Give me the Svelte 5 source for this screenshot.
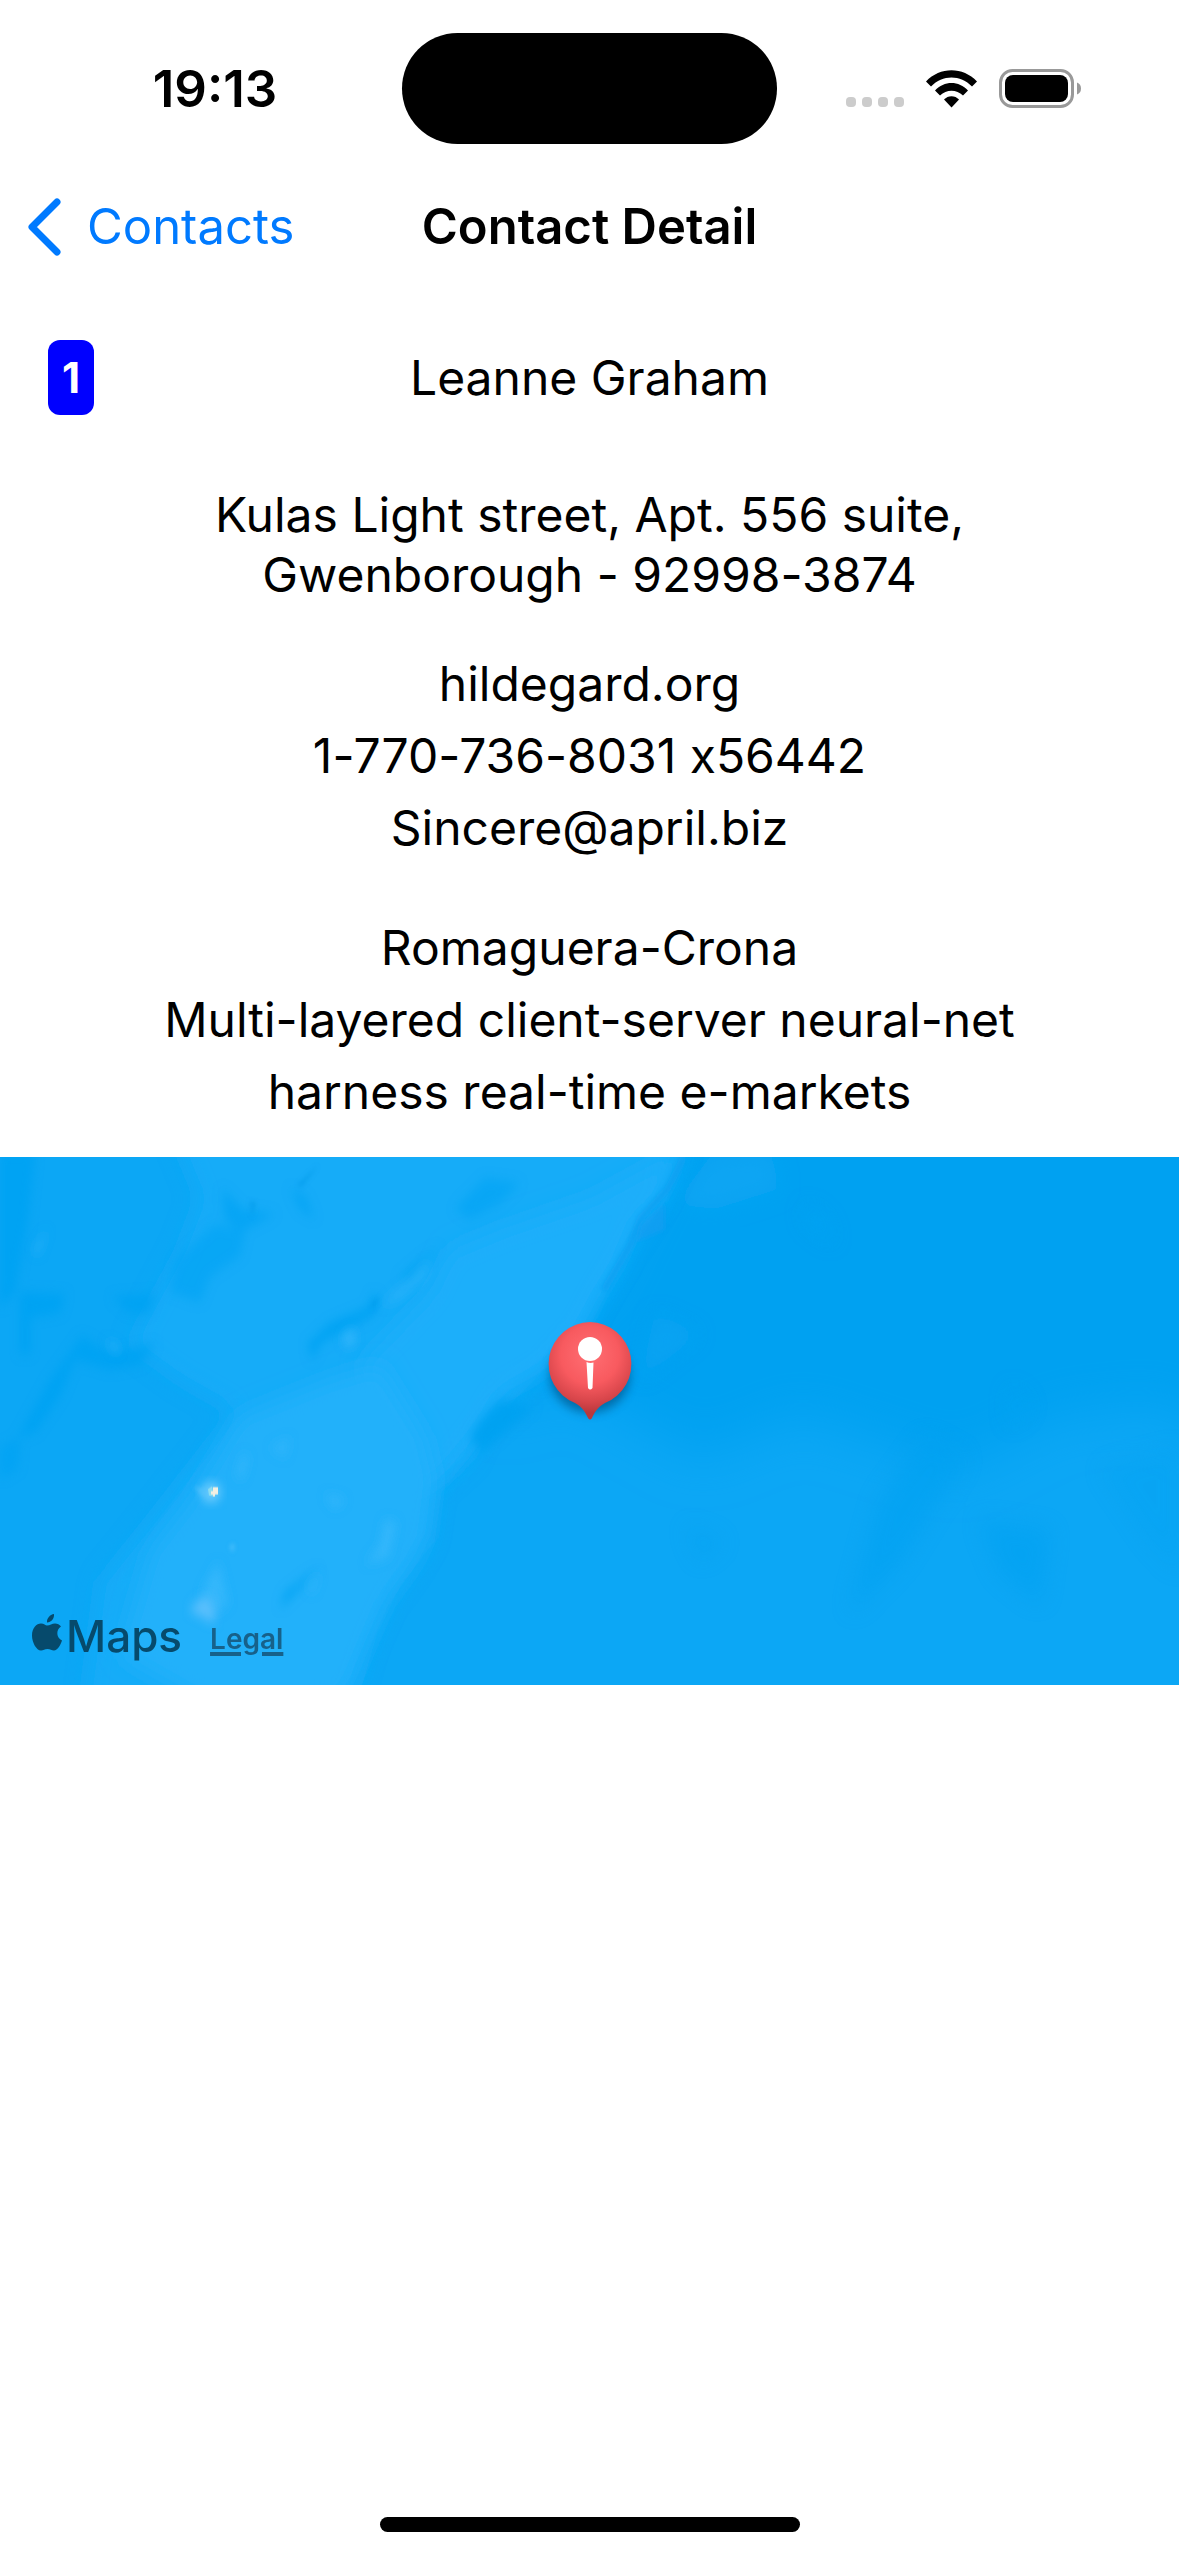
<script>
  const contact = {
    id: 1,
    name: 'Leanne Graham',
    address: ['Kulas Light street, Apt. 556 suite,', 'Gwenborough - 92998-3874'],
    website: 'hildegard.org',
    phone: '1-770-736-8031 x56442',
    email: 'Sincere@april.biz',
    company: ['Romaguera-Crona', 'Multi-layered client-server neural-net', 'harness real-time e-markets']
  };
</script>

<div class="screen">
  <header class="status">
    <div class="side"><time class="clock">19:13</time></div>
    <div class="island"></div>
    <div class="side indicators">
      <div class="dots"><i></i><i></i><i></i><i></i></div>
      <svg class="wifi" viewBox="0 0 51 38" width="51" height="38" aria-label="Wi-Fi">
        <path d="M0 11.500C14-3.500 37-3.500 51 11.500L46 16.500C34.500 4.500 16.500 4.500 5 16.500Z" />
        <path d="M9 20.500C18 10.500 33 10.500 42 20.500L37 25.500C30.500 19 20.500 19 14 25.500Z" />
        <path d="M18 29.500C22 25 29 25 33 29.500L25.500 37.500Z" />
      </svg>
      <svg class="battery" viewBox="0 0 83 39" width="83" height="39" aria-label="Battery full">
        <rect x="1.500" y="1.500" width="72" height="36" rx="12" fill="none" stroke="#999" stroke-width="3" />
        <rect x="6" y="6" width="63" height="27" rx="8" />
        <path d="M78 13.500Q82 15 82 19.500T78 25.500Z" fill="#999" />
      </svg>
    </div>
  </header>

  <nav class="bar">
    <button class="back">
      <svg viewBox="0 0 34 58" width="34" height="58" aria-hidden="true">
        <path d="M30 4L5 29L30 54" fill="none" stroke="currentColor" stroke-width="7" stroke-linecap="round" stroke-linejoin="round" />
      </svg>
      <span>Contacts</span>
    </button>
    <h1>Contact Detail</h1>
  </nav>

  <main>
    <section class="head">
      <span class="badge">{contact.id}</span>
      <h2>{contact.name}</h2>
    </section>
    <address>
      {#each contact.address as line}<div>{line}</div>{/each}
    </address>
    <section class="group">
      <p>{contact.website}</p>
      <p>{contact.phone}</p>
      <p>{contact.email}</p>
    </section>
    <section class="group company">
      {#each contact.company as line}<p>{line}</p>{/each}
    </section>

    <section class="map" aria-label="Map">
      <svg class="sea" viewBox="0 0 1179 528" preserveAspectRatio="xMidYMid slice" aria-hidden="true">
        <defs>
          <filter id="b2" x="-20%" y="-20%" width="140%" height="140%"><feGaussianBlur stdDeviation="2" /></filter>
          <filter id="b4" x="-30%" y="-30%" width="160%" height="160%"><feGaussianBlur stdDeviation="5" /></filter>
          <filter id="b8" x="-30%" y="-30%" width="160%" height="160%"><feGaussianBlur stdDeviation="10" /></filter>
          <filter id="b20" x="-30%" y="-30%" width="160%" height="160%"><feGaussianBlur stdDeviation="24" /></filter>
        </defs>
        <rect width="1179" height="528" fill="#0ca7f5" />

        <g transform="scale(1 1.038)">
          <!-- deep water, east -->
          <path d="M700-60H1260V300L1160 240L1060 250L960 300L800 250L700 290L560 215L500 250L520 180L600 130L640 50Z" fill="#00a1f1" filter="url(#b20)" />
          <g fill="#00a1f1" filter="url(#b8)" opacity=".6">
            <path d="M925 270L965 290L900 390L850 440L880 330Z" />
            <path d="M980 350L1050 360L1040 430L1000 400Z" />
            <path d="M1100 300L1179 280V400L1150 370Z" opacity=".5" />
            <path d="M685 355L725 370L700 390Z" opacity=".6" />
          </g>
          <path d="M710 0L770-5L780 30L715 50L675 45Z" fill="#10a5f3" filter="url(#b8)" />
          <path d="M805 45L825 60L835 85L805 62ZM655 150L700 170L640 215ZM1010 220L1030 240L1010 260Z" fill="#0ca4f3" filter="url(#b8)" opacity=".7" />

          <!-- shelf, west -->
          <path d="M170-30H690L660 40L632 80L600 130L582 165L530 210L485 255L470 290L435 320L428 370L395 410L370 460L340 560H80L100 410L150 350L235 245L180 215L130 180L180 90L200 40Z" fill="#17acf8" filter="url(#b8)" />
          <path d="M685-10L660 40L636 62L620 100L598 135L582 165L545 205L500 230L485 255L470 275L440 310L400 330L360 200L430 130L450 90L500 70L590 40Z" fill="#1daffa" filter="url(#b8)" />
          <path d="M330 215L380 200L425 270L435 310L428 365L415 390L385 430L345 520L230 540L120 480L150 380L190 330L240 250Z" fill="#24b1fa" filter="url(#b8)" />
          <path d="M684 0L668 30L640 60L630 85L604 128" fill="none" stroke="#109ff0" stroke-width="6" opacity=".7" filter="url(#b2)" />
          <path d="M640 65L665 45V70L636 82Z" fill="#149df0" opacity=".7" filter="url(#b2)" />
          <path d="M500 235L535 240L505 265L482 285L470 270L484 250Z" fill="#04a2f1" filter="url(#b4)" />

          <!-- ridges and hollows -->
          <g fill="#06a3f3" filter="url(#b4)">
            <path d="M0-5H35L28 60L15 130L0 145Z" />
            <path d="M20 130L65 132L60 150L30 155V190H20Z" />
            <path d="M82 172L110 190L155 180L140 200L110 205L75 195L60 230L35 265L18 270L50 215Z" />
            <path d="M112 135L155 132L148 150L130 150Z" />
            <path d="M215 65L245 72L240 95L210 115L200 140L170 130L175 100Z" opacity=".6" />
            <path d="M222 30L242 50L275 55L240 72L225 60Z" opacity=".7" />
            <path d="M290 30L305 38L315 60L300 50Z" opacity=".7" />
            <path d="M368 145L374 130L380 140L372 154L340 168L320 180L312 196L308 180L330 160Z" />
            <path d="M440 85L410 115L398 118L420 100Z" />
            <path d="M320 395L300 415L280 435L285 420L305 405Z" />
            <path d="M485 20L520 25L500 45L470 60L455 50Z" opacity=".6" />
            <path d="M0 280L20 270L18 300L0 310Z" opacity=".7" />
          </g>
          <g fill="#0499ea" filter="url(#b2)">
            <path d="M298 26L318 8L309 20L300 30Z" opacity=".6" />
            <path d="M250 42L256 44L252 58Z" opacity=".6" />
            <path d="M372 140L380 135L372 148Z" opacity=".6" />
          </g>
          <g fill="#36b7fb" filter="url(#b4)">
            <path d="M342 175L352 165L356 176L348 184Z" />
            <path d="M380 145L395 130L412 118L430 98L425 115L400 136Z" opacity=".6" />
            <path d="M244 285L248 290L242 310L236 308Z" />
            <path d="M385 350L396 352L388 385L366 392L380 375Z" />
            <path d="M325 325L345 330L335 338Z" />
            <path d="M308 415L320 400L312 420Z" />
            <path d="M105 175L118 183V190Z" />
            <path d="M33 90L48 68L38 95Z" opacity=".6" />
            <path d="M270 280L290 270L285 290Z" opacity=".6" />
            <path d="M218 390L228 430L215 440L202 420Z" />
          </g>
          <path d="M196 428L208 422L216 438L214 450L200 442L190 438Z" fill="#5abffc" filter="url(#b4)" />
          <circle cx="211" cy="323" r="10" fill="#6dcbfc" filter="url(#b4)" />
          <path d="M193 317L208 322L205 327ZM230 375L234 372L233 382Z" fill="#55c2fb" filter="url(#b2)" />
          <path d="M208 320L212 317L214 327L209 326Z" fill="#8cdcf0" />
          <path d="M213 318H218V325H215V327H213V325H211V322H213Z" fill="#f3efe2" />
        </g>
      </svg>
      <svg class="pin" viewBox="0 0 124 140" width="124" height="140" aria-label="Contact location">
        <defs>
          <radialGradient id="ball" gradientUnits="userSpaceOnUse" cx="62" cy="46" r="58">
            <stop offset="0" stop-color="#ff6e73" /><stop offset=".5" stop-color="#f85a5f" /><stop offset=".8" stop-color="#d8464b" /><stop offset="1" stop-color="#b9383c" />
          </radialGradient>
          <filter id="shade" x="-40%" y="-40%" width="180%" height="180%"><feGaussianBlur stdDeviation="5" /></filter>
        </defs>
        <ellipse cx="62" cy="66" rx="40" ry="38" fill="#024a78" opacity=".6" filter="url(#shade)" />
        <path d="M62 13A42 42 0 0 1 77 94C69 98 66 105 64 109Q62 112 60 109C58 105 55 98 47 94A42 42 0 0 1 62 13Z" fill="url(#ball)" />
        <circle cx="62" cy="40" r="12" fill="#fff" />
        <path d="M58.500 53Q62 54.500 65.500 53.500L64.500 79Q62 82 60 79Z" fill="#fff" />
      </svg>
      <div class="credit">
        <span class="brand">
          <svg viewBox="0 0 30 38" width="30" height="38" aria-label="Apple">
            <path d="M15 11.500C18 11.500 20 9.500 23 9.500C25.500 9.500 27.500 10.500 29 12.500C23.500 16 24.500 24 30 26.500C28.500 31 25.500 36.500 22 36.500C19.500 36.500 18.500 35 15.500 35C12.500 35 11.500 36.500 9 36.500C4.500 36.500 0 28.500 0 21.500C0 14 4.500 9.500 9 9.500C12 9.500 13.500 11.500 15 11.500Z" />
            <path d="M15 8.500C14.500 4.500 18 .500 22 0C22.500 4.500 19 8.500 15 8.500Z" />
          </svg>
          <span>Maps</span>
        </span>
        <a href="#legal">Legal</a>
      </div>
    </section>
  </main>

  <div class="home"></div>
</div>

<style>
  :global(body) { background: #fff; }
  .screen {
    min-height: 100vh;
    display: flex;
    flex-direction: column;
    font-family: Inter, "Liberation Sans", sans-serif;
    font-size: 49px;
    line-height: 60px;
    font-variant-ligatures: no-contextual;
    color: #000;
  }
  h1, h2, p { margin: 0; font-size: inherit; }
  .status { display: grid; grid-template-columns: 1fr auto 1fr; align-items: center; padding: 33px 0 17px; }
  .side { display: flex; justify-content: center; align-items: center; }
  .clock { padding-left: 28px; font-size: 51px; font-weight: 600; font-variant-ligatures: normal; }
  .island { width: 375px; height: 111px; border-radius: 56px; background: #000; }
  .indicators { gap: 22px; padding-right: 28px; }
  .dots { display: flex; gap: 6px; padding-top: 26px; }
  .dots i { width: 10px; height: 10px; border-radius: 4px; background: #ccc; }
  .bar { display: grid; grid-template-columns: 1fr auto 1fr; align-items: center; height: 132px; }
  .back {
    display: flex; align-items: center; justify-self: start; gap: 26px;
    border: 0; background: none; padding: 0 0 0 27px; font: inherit; color: #007aff;
  }
  h1 { font-weight: 600; }
  main { font-size: 48px; }
  .head { display: grid; grid-template-columns: 1fr auto 1fr; align-items: center; padding: 47px 48px 0; }
  h2 { font-weight: 400; }
  .badge {
    justify-self: start; min-width: 46px; border-radius: 12px; background: #00f;
    color: #fff; font-size: 42px; font-weight: 700; line-height: 75px; text-align: center;
  }
  address { padding-top: 70px; font-style: normal; text-align: center; }
  .group { display: flex; flex-direction: column; gap: 12px; padding-top: 49px; text-align: center; }
  .company { padding-top: 60px; }
  .map { position: relative; height: 528px; margin-top: 35px; overflow: hidden; display: flex; align-items: flex-end; }
  .sea { position: absolute; inset: 0; width: 100%; height: 100%; }
  .pin { position: absolute; left: 50%; top: 50%; transform: translate(-50%, -112px); }
  .credit { position: relative; display: flex; align-items: center; gap: 28px; padding: 0 32px 16px; color: #064a6c; }
  .brand { display: flex; align-items: center; gap: 4px; font-size: 44px; font-weight: 500; }
  .brand svg { margin-bottom: 6px; fill: currentColor; }
  a {
    padding-top: 7px; color: #17618a; font-size: 28px; font-weight: 600;
    text-decoration-thickness: 4px; text-underline-offset: 3px;
  }
  .home { width: 420px; height: 15px; border-radius: 8px; background: #000; margin: auto auto 24px; }
</style>
